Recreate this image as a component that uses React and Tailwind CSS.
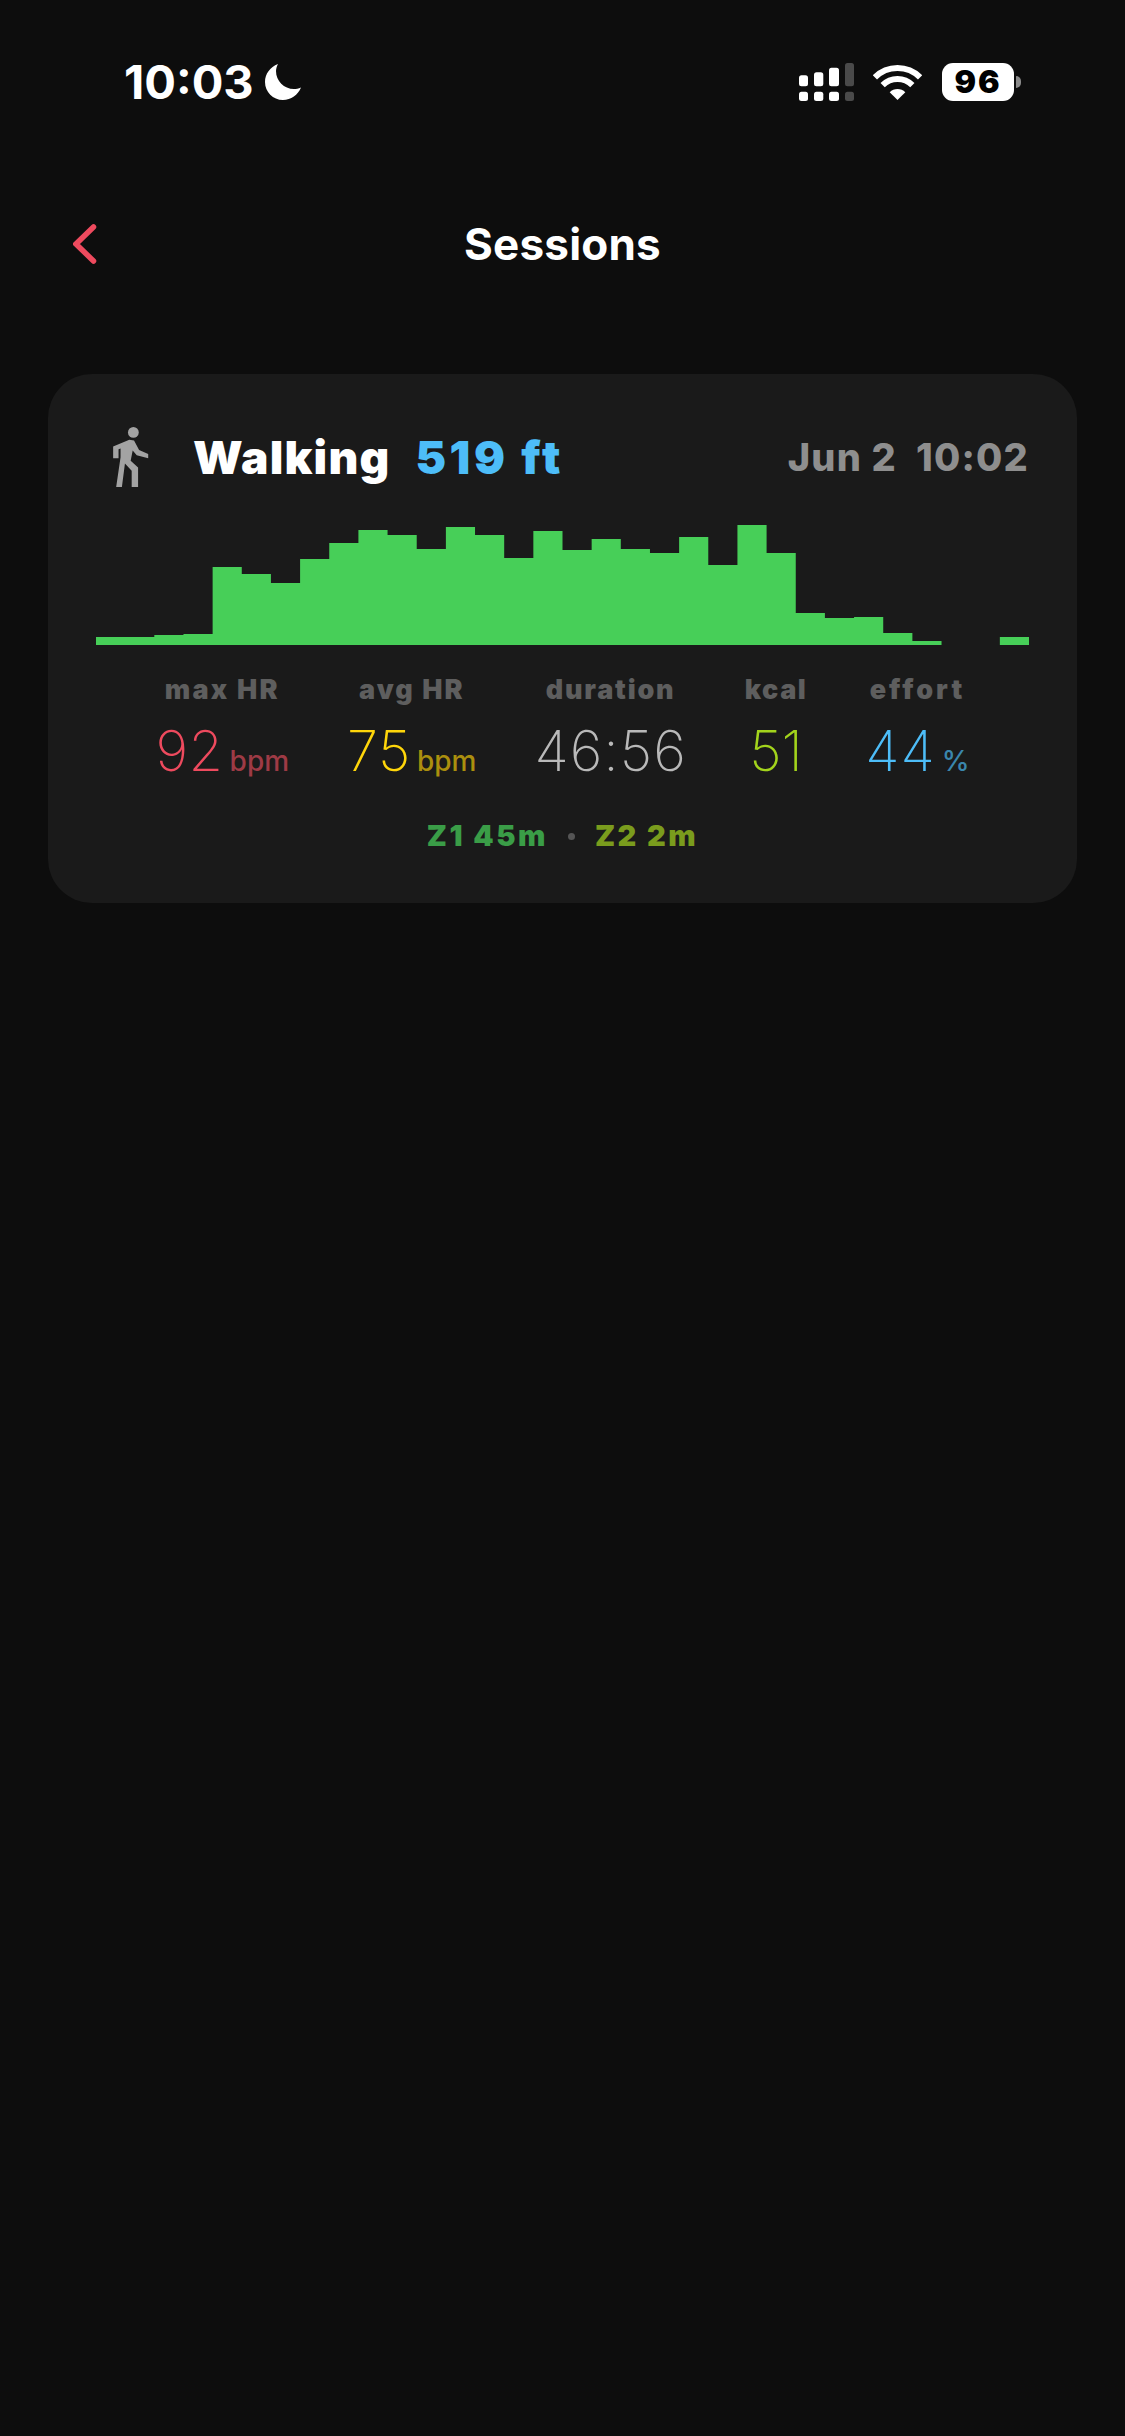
import React from 'react';

const bars = [8, 8, 10, 11, 78, 71, 62, 86, 102, 115, 110, 96, 118, 110, 87, 114, 95, 106, 96, 92, 108, 80, 120, 92, 32, 27, 28, 12, 4, 0, 0, 8];

const stats = [
    { label: "max HR", value: "92", unit: "bpm", labelTrack: "tracking-[2.200px]", valueTrack: "tracking-[0.500px]", valueColor: "text-[#ee4a5e]", unitColor: "text-[#9e3a45]" },
    { label: "avg HR", value: "75", unit: "bpm", labelTrack: "tracking-[2px]", valueTrack: "tracking-[0.500px]", valueColor: "text-[#ffd60a]", unitColor: "text-[#ab8f0e]" },
    { label: "duration", value: "46:56", labelTrack: "tracking-[1.800px]", valueTrack: "tracking-[1px]", valueColor: "text-[#b9b9b9]" },
    { label: "kcal", value: "51", labelTrack: "tracking-[1.500px]", valueTrack: "tracking-[0px]", valueColor: "text-[#a3d41c]" },
    { label: "effort", value: "44", unit: "%", labelTrack: "tracking-[3px]", valueTrack: "tracking-[1px]", valueColor: "text-[#4dbdf8]", unitColor: "text-[#3a86ad]" },
];

const BAR_W = 933 / bars.length;

const chartPath = () => {
    let d = `M0 120`;
    bars.forEach((h, i) => {
        d += ` L${(i * BAR_W).toFixed(2)} ${120 - h} L${((i + 1) * BAR_W).toFixed(2)} ${120 - h}`;
    });
    return d + ` L933 120 Z`;
};

const Moon = () => (
    <svg width="36" height="36" viewBox="0 0 36 36" fill="#fff">
        <path d="M13 0C5 3 0 10 0 18C0 28 8 36 18 36C26 36 33 31 36 23.5C33.500 24.500 31 25 29 25C19 25 11 17 11 7C11 4.500 12 2 13 0Z" />
    </svg>
);

const Signal = () => (
    <svg width="55" height="38" viewBox="0 0 55 38">
        <rect x="0" y="12.300" width="9" height="11" rx="2.500" fill="#fff" />
        <rect x="15" y="9.300" width="9.300" height="14" rx="2.500" fill="#fff" />
        <rect x="30" y="4.700" width="10" height="18.600" rx="2.500" fill="#fff" />
        <rect x="46" y="0" width="9" height="23.300" rx="2.500" fill="#4a4a4a" />
        <rect x="0" y="28.700" width="9" height="9.300" rx="2.500" fill="#fff" />
        <rect x="15" y="28.700" width="9.300" height="9.300" rx="2.500" fill="#fff" />
        <rect x="30" y="28.700" width="10" height="9.300" rx="2.500" fill="#fff" />
        <rect x="46" y="28.700" width="9" height="9.300" rx="2.500" fill="#4a4a4a" />
    </svg>
);

const Wifi = () => (
    <svg width="49" height="35" viewBox="0 0 49 35" fill="none" stroke="#fff" strokeWidth="6">
        <path d="M1.900 12.400A32 32 0 0 1 47.100 12.400" />
        <path d="M9.650 20.150A21 21 0 0 1 39.350 20.150" />
        <path d="M24.500 35L16.700 27.200A11 11 0 0 1 32.300 27.200Z" fill="#fff" stroke="none" />
    </svg>
);

const Walker = () => (
    <svg width="37" height="60" viewBox="208 172 107 178" fill="#a3a3a3">
        <circle cx="270" cy="188" r="16" />
        <path d="M210 230L258 210L272 212L287 240L314 252V265L280 256L268 242L262 272L284 292V350H265V302L245 280L236 350H219L232 262V236L226 238V265H210Z" />
    </svg>
);

export default function App() {
    return (
        <div className="min-h-[2436px] bg-[#0d0d0d] font-['Inter',sans-serif] text-white">
            {/* status bar */}
            <div className="flex items-center justify-between pl-[124px] pr-[104px] pt-[63px]">
                <div className="flex items-center gap-[11px]">
                    <span className="text-[47px] font-bold leading-[38px]">10:03</span>
                    <Moon />
                </div>
                <div className="flex items-center">
                    <Signal />
                    <div className="ml-[19px] mr-[20px]"><Wifi /></div>
                    <div className="flex items-center">
                        <div className="flex h-[38px] w-[72px] items-center justify-center rounded-[11px] bg-white text-[32px] font-black tracking-[2px] leading-none text-black">96</div>
                        <div className="ml-[2px] h-[12px] w-[5px] rounded-r-full bg-[#8a8a8a]"></div>
                    </div>
                </div>
            </div>

            {/* header */}
            <div className="mt-[118px] grid grid-cols-[1fr_auto_1fr] items-center px-[73px]">
                <svg width="24" height="40" viewBox="0 0 24 40" fill="none" stroke="#ee4a5e" strokeWidth="5.500" strokeLinecap="round" strokeLinejoin="miter">
                    <path d="M20.500 3L3 20L20.500 37" />
                </svg>
                <h1 className="text-[44px] font-bold tracking-[0.200px] leading-[50px]">Sessions</h1>
                <div></div>
            </div>

            {/* session card */}
            <div className="mx-[48px] mt-[105px] h-[529px] rounded-[44px] bg-[#1a1a1a] px-[48px] pt-[52px]">
                <div className="flex h-[62px] items-center justify-between">
                    <div className="flex items-center">
                        <div className="ml-[16px]"><Walker /></div>
                        <span className="ml-[44px] text-[46px] font-black tracking-[1.200px] leading-none">Walking</span>
                        <span className="ml-[25px] text-[46px] font-black tracking-[3.500px] leading-none text-[#4dbdf8]">519 ft</span>
                    </div>
                    <span className="text-[38px] font-extrabold tracking-[1.200px] leading-none text-[#8e8e8e]">Jun 2&nbsp;&nbsp;10:02</span>
                </div>

                <svg className="mt-[37px] block" width="933" height="120" viewBox="0 0 933 120">
                    <path d={chartPath()} fill="#47cf58" />
                </svg>

                <div className="mt-[30px] flex justify-center gap-[58px]">
                    {stats.map((s) => (
                        <div key={s.label} className="flex flex-col items-center">
                            <span className={`text-[27px] font-black leading-[30px] text-[#5e5e5e] ${s.labelTrack}`}>{s.label}</span>
                            <div className="mt-[16px] flex items-baseline">
                                <span className={`text-[56px] font-[250] leading-[60px] ${s.valueTrack} ${s.valueColor}`}>{s.value}</span>
                                {s.unit && <span className={`ml-[6px] text-[28px] font-medium leading-none ${s.unitColor}`}>{s.unit}</span>}
                            </div>
                        </div>
                    ))}
                </div>

                <div className="mt-[38px] flex items-center justify-center text-[29px] font-black tracking-[2.500px] leading-[34px]">
                    <span className="text-[#3a9d47]">Z1 45m</span>
                    <span className="mx-[20px] h-[7px] w-[7px] rounded-full bg-[#555555]"></span>
                    <span className="text-[#7a9c1d]">Z2 2m</span>
                </div>
            </div>
        </div>
    );
}
